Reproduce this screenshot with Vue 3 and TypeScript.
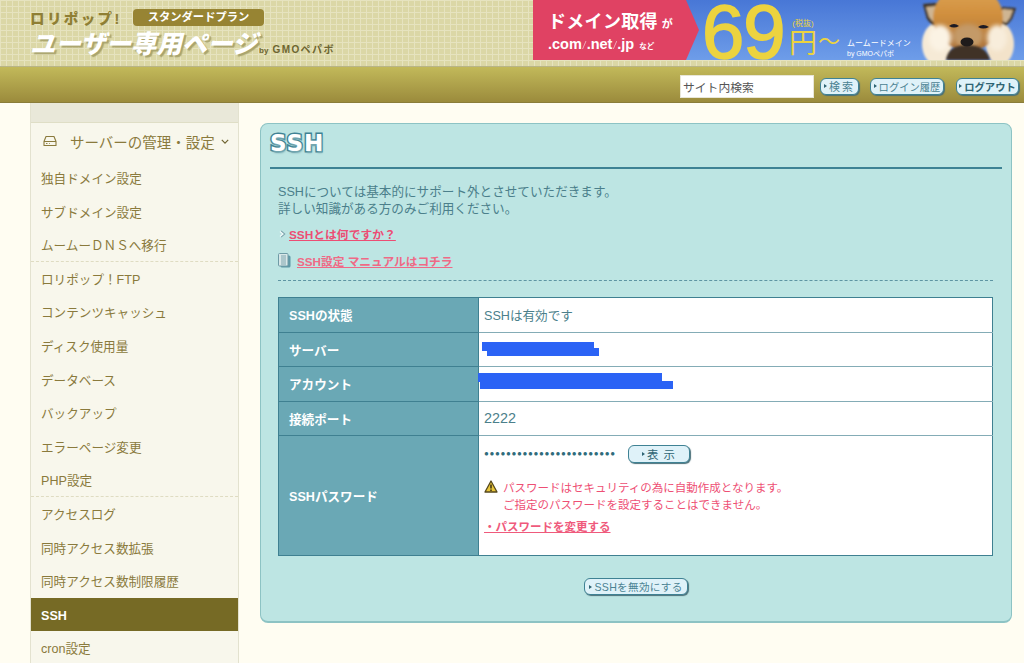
<script setup lang="ts">
type MenuItem = { label: string; active?: boolean; divider?: boolean }

const menu: MenuItem[] = [
  { label: '独自ドメイン設定' },
  { label: 'サブドメイン設定' },
  { label: 'ムームーＤＮＳへ移行', divider: true },
  { label: 'ロリポップ！FTP' },
  { label: 'コンテンツキャッシュ' },
  { label: 'ディスク使用量' },
  { label: 'データベース' },
  { label: 'バックアップ' },
  { label: 'エラーページ変更' },
  { label: 'PHP設定', divider: true },
  { label: 'アクセスログ' },
  { label: '同時アクセス数拡張' },
  { label: '同時アクセス数制限履歴' },
  { label: 'SSH', active: true },
  { label: 'cron設定' },
]

const dots = '●'.repeat(24)
</script>

<template>
  <div class="page">
    <header class="header">
      <div class="logo">
        <div class="logo-top">
          <span class="logo-brand">ロリポップ!</span>
          <span class="logo-plan">スタンダードプラン</span>
        </div>
        <div class="logo-bottom">
          <span class="logo-title">ユーザー専用ページ</span>
          <span class="logo-by"><small>by</small> GMOペパボ</span>
        </div>
      </div>
      <div class="banner">
        <div class="banner-red">
          <div class="banner-head">ドメイン取得<small>が</small></div>
          <div class="banner-tld">.com<i>/</i>.net<i>/</i>.jp <small>など</small></div>
        </div>
        <div class="banner-price">69</div>
        <div class="banner-yen">
          <small>(税抜)</small>
          <span>円</span>
        </div>
        <div class="banner-tilde">〜</div>
        <div class="banner-muumuu">
          <span>ムームードメイン</span>
          <small>by GMOペパボ</small>
        </div>
        <svg class="banner-dog" viewBox="0 0 114 60" aria-hidden="true">
          <defs>
            <linearGradient id="fur" x1="0" y1="0" x2="0" y2="1">
              <stop offset="0" stop-color="#e0a655" />
              <stop offset="0.45" stop-color="#d08f3e" />
              <stop offset="1" stop-color="#a9713a" />
            </linearGradient>
            <filter id="soft" x="-10%" y="-10%" width="120%" height="120%">
              <feGaussianBlur stdDeviation="1" />
            </filter>
            <filter id="softer" x="-20%" y="-20%" width="140%" height="140%">
              <feGaussianBlur stdDeviation="2.2" />
            </filter>
          </defs>
          <g filter="url(#soft)">
            <ellipse cx="24" cy="44" rx="15" ry="21" fill="#f6ead6" />
            <ellipse cx="87" cy="44" rx="14" ry="21" fill="#f3e3ca" />
            <path d="M10 4 L24 3 L33 16 L20 26 L14 19 Z" fill="#3e2d1c" />
            <path d="M13 7 L23 6 L29 15 L20 22 L16 17 Z" fill="#cfb592" />
            <path d="M103 8 L89 7 L80 18 L93 26 L99 19 Z" fill="#3e2d1c" />
            <path d="M100 10 L90 9 L84 18 L93 23 L97 18 Z" fill="#cfb592" />
            <ellipse cx="55" cy="18" rx="35" ry="33" fill="url(#fur)" />
          </g>
          <g filter="url(#softer)">
            <ellipse cx="27" cy="38" rx="11" ry="13" fill="#fbf3e4" />
            <ellipse cx="84" cy="38" rx="10" ry="13" fill="#f8eddb" />
            <ellipse cx="55" cy="36" rx="15" ry="12" fill="#c49a68" />
          </g>
          <g filter="url(#soft)">
            <path d="M33 60 C34 50 42 45 54 45 C66 45 75 50 77 60 Z" fill="#3f3228" />
          </g>
          <ellipse cx="54" cy="42" rx="6.5" ry="4.6" fill="#1f1b1b" />
          <path d="M36 26 Q41 22 46 26 Q41 29 36 26 Z" fill="#1c1a24" />
          <path d="M65 27 Q70 23 76 27 Q70 30 65 27 Z" fill="#1c1a24" />
        </svg>
      </div>
    </header>

    <nav class="toolbar">
      <input class="search" type="text" value="サイト内検索" aria-label="サイト内検索" />
      <button class="pill pill-search" type="button"><b class="tri"></b>検索</button>
      <button class="pill pill-history" type="button"><b class="tri"></b>ログイン履歴</button>
      <button class="pill pill-logout" type="button"><b class="tri"></b>ログアウト</button>
    </nav>

    <div class="body">
      <aside class="sidebar">
        <div class="side-top"></div>
        <div class="side-head">
          <svg class="drive" viewBox="0 0 14 12" aria-hidden="true">
            <path d="M3 1.5 H11 L13 6.5 V10.5 H1 V6.5 Z M1 6.5 H13" fill="none" stroke="#8a7a3c" stroke-width="1.1" stroke-linejoin="round" />
            <path d="M3 8.5 H4.5 M6 8.5 H6.8" stroke="#8a7a3c" stroke-width="0.9" />
          </svg>
          <span>サーバーの管理・設定</span>
          <svg class="chevron" viewBox="0 0 10 6" aria-hidden="true">
            <path d="M1 1 L5 5 L9 1" fill="none" stroke="#6f6430" stroke-width="1.5" />
          </svg>
        </div>
        <a
          v-for="item in menu"
          :key="item.label"
          class="side-item"
          :class="{ active: item.active, divider: item.divider }"
        >{{ item.label }}</a>
      </aside>

      <main class="panel">
        <h1 class="panel-title">SSH</h1>
        <p class="intro">SSHについては基本的にサポート外とさせていただきます。<br />詳しい知識がある方のみご利用ください。</p>
        <p class="help">
          <svg class="spark" viewBox="0 0 8 8" aria-hidden="true">
            <path d="M3 1 L6.5 4 L3 7" fill="none" stroke="#7fa5ae" stroke-width="1.4" />
            <path d="M2 1.5 L5 4 L2 6.5" fill="none" stroke="#f4fbfb" stroke-width="1.1" />
          </svg>
          <a class="link-strong">SSHとは何ですか？</a>
        </p>
        <p class="manual">
          <svg class="doc" viewBox="0 0 13 15" aria-hidden="true">
            <rect x="2.5" y="2.5" width="10" height="12" rx="1.5" fill="#5f98a6" />
            <rect x="0.5" y="0.5" width="9.5" height="12.5" rx="1" fill="#d8e7e8" stroke="#6f9ba6" />
            <path d="M3 3 H8 M3 5 H8 M3 7 H8 M3 9 H8 M3 11 H8" stroke="#7fa5ae" stroke-width="1" />
          </svg>
          <a class="link-manual">SSH設定 マニュアルはコチラ</a>
        </p>
        <div class="rule"></div>

        <table class="info">
          <tbody>
            <tr>
              <th>SSHの状態</th>
              <td>SSHは有効です</td>
            </tr>
            <tr>
              <th>サーバー</th>
              <td class="masked">
                <span class="scribble s1"></span>
                <span class="scribble s2"></span>
              </td>
            </tr>
            <tr>
              <th>アカウント</th>
              <td class="masked">
                <span class="scribble s3"></span>
                <span class="scribble s4"></span>
              </td>
            </tr>
            <tr>
              <th>接続ポート</th>
              <td class="port">2222</td>
            </tr>
            <tr class="tall">
              <th>SSHパスワード</th>
              <td class="pw">
                <div class="pw-line">
                  <span class="pw-dots">{{ dots }}</span>
                  <button class="pill pill-show" type="button"><b class="tri"></b>表 示</button>
                </div>
                <div class="warn">
                  <svg class="warn-icon" viewBox="0 0 14 13" aria-hidden="true">
                    <path d="M7 1 L13 12 H1 Z" fill="#e8c53a" stroke="#54471c" stroke-width="1.3" stroke-linejoin="round" />
                    <path d="M7 4.5 V8.5 M7 9.5 V11" stroke="#2d2611" stroke-width="1.4" />
                  </svg>
                  <p>パスワードはセキュリティの為に自動作成となります。<br />ご指定のパスワードを設定することはできません。</p>
                </div>
                <a class="pw-change">・パスワードを変更する</a>
              </td>
            </tr>
          </tbody>
        </table>

        <div class="actions">
          <button class="pill pill-disable" type="button"><b class="tri"></b>SSHを無効にする</button>
        </div>
      </main>
    </div>
  </div>
</template>

<style scoped>
.page {
  height: 663px;
  overflow: hidden;
  background: #fffdf2;
  font-family: "Liberation Sans", "Noto Sans CJK JP", sans-serif;
  font-size: 12.6px;
  color: #4b7f8b;
}

/* header */
.header {
  display: flex;
  justify-content: space-between;
  height: 67px;
  box-sizing: border-box;
  background-color: #dbd7a6;
  background-image:
    linear-gradient(#e6e3bf 1px, transparent 1px),
    linear-gradient(90deg, #e6e3bf 1px, transparent 1px);
  background-size: 6px 6px;
  border-bottom: 1px solid #b9b588;
}
.logo {
  padding: 9px 0 0 30px;
}
.logo-top {
  display: flex;
  align-items: center;
  gap: 6px;
  height: 17px;
}
.logo-brand {
  width: 97px;
  font-size: 14.5px;
  font-weight: 900;
  letter-spacing: 2.4px;
  color: #8f7f34;
  white-space: nowrap;
}
.logo-plan {
  width: 131px;
  height: 17px;
  line-height: 17px;
  border-radius: 4px;
  background: #978433;
  color: #fff;
  font-size: 11.3px;
  font-weight: 700;
  text-align: center;
}
.logo-bottom {
  display: flex;
  align-items: flex-end;
  margin-top: 5px;
  white-space: nowrap;
}
.logo-title {
  width: 229px;
  font-size: 25.4px;
  line-height: 27px;
  font-weight: 900;
  font-style: italic;
  color: #fff;
  text-shadow: 2px 2px 1px #a9a46d;
}
.logo-by {
  font-size: 10px;
  line-height: 14px;
  font-weight: 700;
  letter-spacing: 1.4px;
  color: #6d6531;
}
.logo-by small {
  font-size: 8px;
  letter-spacing: 0;
}
.banner {
  display: flex;
  width: 491px;
  height: 60px;
  background: linear-gradient(#4877d6, #6e9de9);
  color: #fff;
  white-space: nowrap;
}
.banner-red {
  flex: none;
  width: 166px;
  padding: 10px 0 0 15px;
  box-sizing: border-box;
  background: #e04263;
  clip-path: polygon(0 0, 153px 0, 100% 50%, 153px 100%, 0 100%);
}
.banner-head {
  font-size: 18px;
  line-height: 24px;
  font-weight: 700;
  letter-spacing: 0.3px;
}
.banner-head small {
  font-size: 11px;
  margin-left: 4px;
}
.banner-tld {
  font-size: 14.5px;
  line-height: 16px;
  font-weight: 700;
}
.banner-tld i {
  font-weight: 400;
  font-size: 10px;
  opacity: 0.6;
  margin: 0 1px;
}
.banner-tld small {
  font-size: 7.5px;
  margin-left: 1px;
}
.banner-price {
  flex: none;
  width: 84px;
  margin-left: 3px;
  padding-top: 2px;
  font-size: 76px;
  line-height: 60px;
  height: 58px;
  letter-spacing: -1px;
  color: #ecd33f;
  -webkit-text-stroke: 1.6px #ecd33f;
  font-family: "Liberation Sans", sans-serif;
}
.banner-yen {
  flex: none;
  display: flex;
  flex-direction: column;
  align-items: center;
  width: 30px;
  margin-left: 2px;
  padding-top: 18px;
  box-sizing: border-box;
  color: #ecd33f;
}
.banner-yen small {
  font-size: 8px;
  line-height: 11px;
}
.banner-yen span {
  font-size: 28px;
  line-height: 30px;
}
.banner-tilde {
  flex: none;
  width: 26px;
  padding-top: 28px;
  box-sizing: border-box;
  font-size: 22px;
  line-height: 28px;
  color: #ecd33f;
}
.banner-muumuu {
  flex: none;
  display: flex;
  flex-direction: column;
  width: 66px;
  margin-left: 3px;
  padding-top: 38px;
  box-sizing: border-box;
  font-size: 8px;
  line-height: 11px;
}
.banner-muumuu small {
  font-size: 7px;
  line-height: 9px;
}
.banner-dog {
  flex: none;
  width: 114px;
  height: 60px;
  margin-left: auto;
}

/* toolbar */
.toolbar {
  display: flex;
  align-items: center;
  justify-content: flex-end;
  height: 36px;
  padding: 3px 5px 0 0;
  box-sizing: border-box;
  background: linear-gradient(#c2b95a, #9b8b3c);
  border-bottom: 1px solid #8a7d3a;
}
.search {
  width: 134px;
  height: 23px;
  box-sizing: border-box;
  margin-right: 6px;
  padding: 0 2px;
  border: 1px solid #e8e6d8;
  background: #fff;
  font: 11.8px "Liberation Sans", "Noto Sans CJK JP", sans-serif;
  color: #555;
}
.pill {
  display: inline-flex;
  align-items: center;
  justify-content: center;
  height: 17px;
  padding: 0;
  box-sizing: border-box;
  border: 1px solid #3f8294;
  border-radius: 6px;
  background: #dff2f9;
  box-shadow: 1px 1px 1px #4a6f78;
  font-family: inherit;
  font-size: 10.3px;
  font-weight: 400;
  color: #4b8393;
  white-space: nowrap;
}
.tri {
  flex: none;
  width: 0;
  height: 0;
  margin-right: 2px;
  border-left: 3px solid #2e6473;
  border-top: 2.5px solid transparent;
  border-bottom: 2.5px solid transparent;
}
.pill-search {
  width: 39px;
  margin-right: 11px;
  letter-spacing: 2px;
  font-size: 11px;
}
.pill-history {
  width: 74px;
  margin-right: 12px;
}
.pill-logout {
  width: 63px;
  font-weight: 700;
  color: #2e6473;
}

/* main area */
.body {
  display: flex;
  align-items: flex-start;
  padding-left: 30px;
}
.sidebar {
  flex: none;
  width: 209px;
  height: 560px;
  box-sizing: border-box;
  border: solid #e3e2cf;
  border-width: 0 1px;
  background: #f8f7ec;
  color: #8a7a3c;
}
.side-top {
  height: 19px;
  background: #e9e8d9;
  border-bottom: 1px solid #dfdec6;
}
.side-head {
  display: flex;
  align-items: center;
  height: 38px;
  padding: 0 0 2px 12px;
  box-sizing: border-box;
  font-size: 14.5px;
  white-space: nowrap;
}
.drive {
  width: 14px;
  height: 12px;
  margin-right: 13px;
}
.chevron {
  width: 8px;
  height: 5px;
  margin-left: 6px;
}
.side-item {
  display: block;
  height: 33.6px;
  line-height: 36px;
  padding-left: 10px;
  box-sizing: border-box;
  white-space: nowrap;
}
.side-item.divider {
  border-bottom: 1px dashed #dfdcc2;
}
.side-item.active {
  background: #766a25;
  color: #fff;
  font-weight: 700;
}
.panel {
  flex: none;
  width: 752px;
  height: 500px;
  box-sizing: border-box;
  margin: 20px 0 0 21px;
  padding: 8px 9px 0;
  border: 1px solid #8dc3c4;
  border-bottom-width: 2px;
  border-radius: 8px;
  background: #bde5e3;
}
.panel-title {
  margin: 0;
  height: 37px;
  box-sizing: border-box;
  border-bottom: 2px solid #3d8294;
  font-family: "DejaVu Sans", sans-serif;
  font-size: 23px;
  line-height: 22px;
  font-weight: 700;
  letter-spacing: 1px;
  color: #fff;
  -webkit-text-stroke: 3px #3f8294;
  paint-order: stroke fill;
  text-shadow: 1px 2px 2px #77a9b2;
}
.intro {
  margin: 15px 0 0 8px;
  line-height: 17px;
}
.help {
  display: flex;
  align-items: center;
  margin: 7px 0 0 8px;
  height: 17px;
}
.spark {
  width: 8px;
  height: 8px;
  margin-right: 3px;
}
.link-strong {
  font-size: 11.8px;
  font-weight: 700;
  color: #ec4d74;
  text-decoration: underline;
}
.manual {
  display: flex;
  align-items: center;
  margin: 9px 0 0 8px;
  height: 18px;
}
.doc {
  width: 13px;
  height: 15px;
  margin-right: 6px;
}
.link-manual {
  font-size: 11.7px;
  font-weight: 700;
  color: #ef6a86;
  text-decoration: underline;
}
.rule {
  margin: 11px 0 0 8px;
  width: 715px;
  border-top: 1px dashed #5e95a3;
}
.info {
  width: 715px;
  margin: 16px 0 0 8px;
  border-collapse: collapse;
  table-layout: fixed;
  background: #fff;
}
.info th,
.info td {
  height: 34.5px;
  padding: 0;
  box-sizing: border-box;
}
.info th {
  width: 200px;
  padding-left: 10px;
  border: 1px solid #3f8091;
  background: #6aa8b5;
  color: #fff;
  text-align: left;
  font-weight: 700;
}
.info td {
  padding-left: 5px;
  border: 1px solid #84acb6;
  border-right-color: #3f8091;
}
.info tr:first-child td {
  border-top-color: #3f8091;
}
.info tr:last-child td {
  border-bottom-color: #3f8091;
}
.info td.port {
  font-size: 14.4px;
}
.tall th,
.tall td {
  height: 120px;
}
.masked {
  position: relative;
}
.scribble {
  position: absolute;
  background: #2b63f5;
}
.s1 {
  left: 3px;
  top: 9px;
  width: 112px;
  height: 9px;
}
.s2 {
  left: 8px;
  top: 15px;
  width: 112px;
  height: 8px;
}
.s3 {
  left: -1px;
  top: 6px;
  width: 184px;
  height: 9px;
}
.s4 {
  left: 1px;
  top: 14px;
  width: 193px;
  height: 8px;
}
.info td.pw {
  vertical-align: top;
}
.pw-line {
  display: flex;
  align-items: center;
  height: 18px;
  margin-top: 9px;
}
.pw-dots {
  width: 131px;
  margin-right: 13px;
  overflow: hidden;
  font-size: 8px;
  letter-spacing: 0.66px;
  line-height: 18px;
  color: #2f6c7c;
  white-space: nowrap;
}
.pill-show {
  width: 62px;
  height: 18px;
  font-size: 11.4px;
  color: #2e6473;
  letter-spacing: 1px;
}
.warn {
  display: flex;
  margin-top: 17px;
  color: #ee4f74;
}
.warn p {
  margin: 0;
  line-height: 17px;
  font-size: 11.5px;
}
.warn-icon {
  flex: none;
  width: 14px;
  height: 13px;
  margin: 0 5px 0 0;
}
.pw-change {
  display: inline-block;
  margin-top: 4px;
  font-size: 11.5px;
  font-weight: 700;
  color: #ef5a7c;
  text-decoration: underline;
}
.actions {
  display: flex;
  justify-content: center;
  margin-top: 22px;
}
.pill-disable {
  width: 104px;
  height: 17px;
  font-size: 10.6px;
  letter-spacing: 0.3px;
}
</style>

<style>
html,
body {
  overflow: hidden;
}
</style>
